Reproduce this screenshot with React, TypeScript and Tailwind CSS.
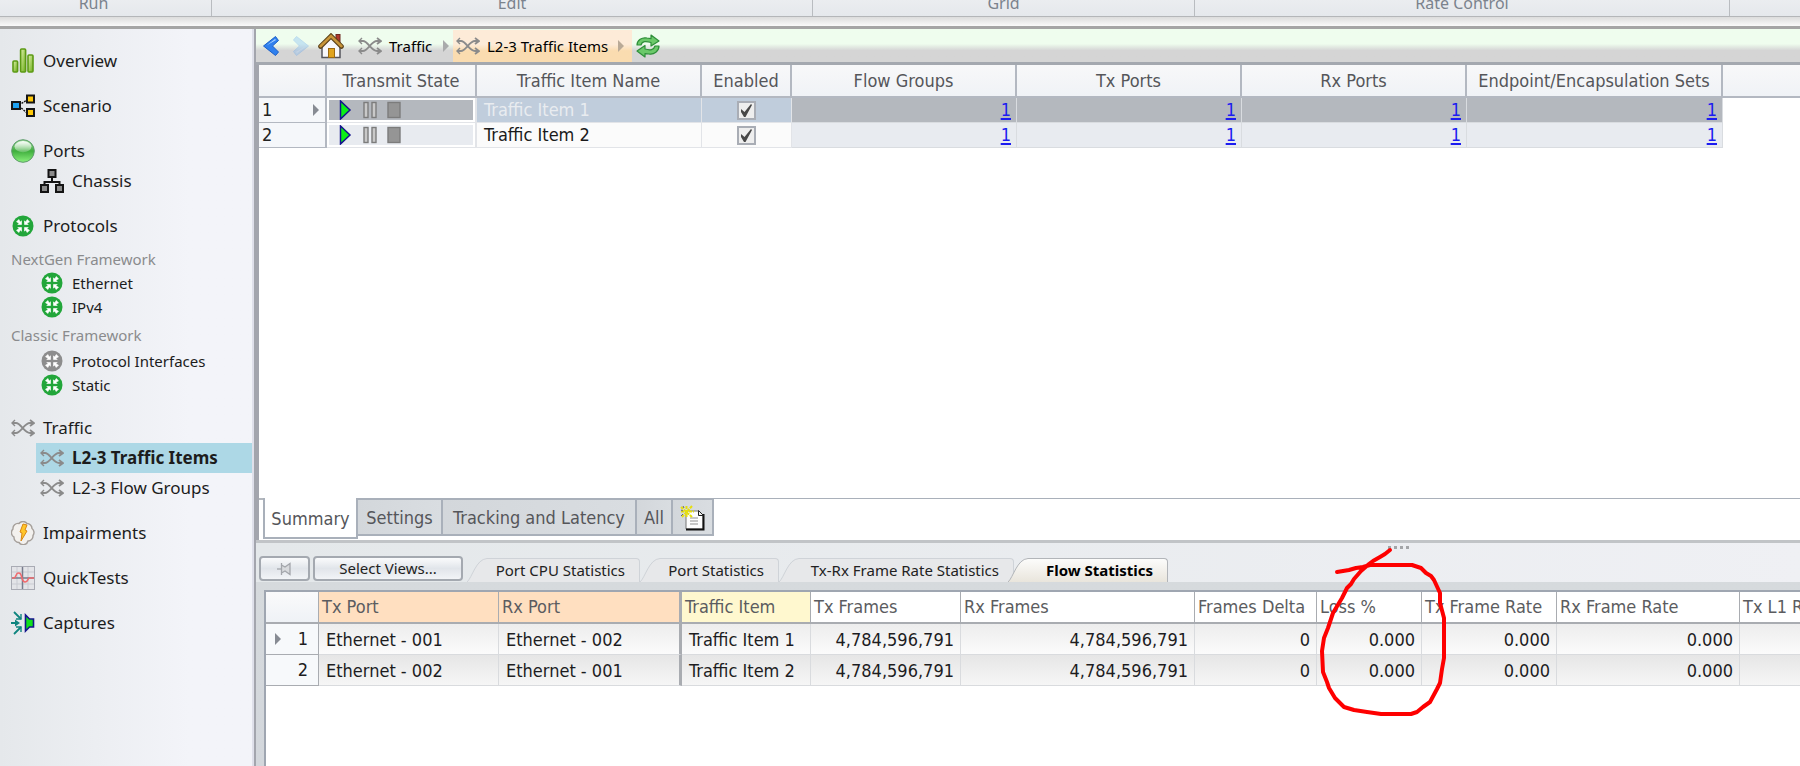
import type { ReactNode } from "react";
import clsx from "clsx";

/* ---------- icons ---------- */

function ShuffleIcon() {
  return (
    <svg width="24" height="18" viewBox="0 0 24 18" fill="none" stroke="#8b8b8b" strokeWidth="1.8" className="shrink-0">
      <path d="M1 4h4c5 0 8 10 14 10h3M1 14h4c5 0 8-10 14-10h3" />
      <path d="M19 1l4 3-4 3M19 11l4 3-4 3" strokeWidth="1.8" />
      <path d="M4 1L1 4l3 3M4 11l-3 3 3 3" strokeWidth="1.4" />
    </svg>
  );
}

function OverviewIcon() {
  return (
    <svg width="24" height="26" viewBox="0 0 24 26" className="shrink-0">
      <defs>
        <linearGradient id="bar" x1="0" y1="0" x2="1" y2="1">
          <stop offset="0" stopColor="#dcf0a8" />
          <stop offset="1" stopColor="#6fae1c" />
        </linearGradient>
      </defs>
      <g fill="url(#bar)" stroke="#5c9a14" strokeWidth="1.6">
        <rect x="2" y="13" width="4.6" height="11" rx="1" />
        <rect x="9.6" y="1" width="5" height="23" rx="1" />
        <rect x="17" y="7" width="5" height="17" rx="1" />
      </g>
    </svg>
  );
}

function ScenarioIcon() {
  return (
    <svg width="24" height="24" viewBox="0 0 24 24" stroke="#161616" strokeWidth="2" className="shrink-0">
      <path d="M8 11L16 6M8 12l8 7" strokeWidth="1.4" strokeDasharray="2 1" />
      <rect x="1" y="8" width="8" height="7" fill="#1ea2f2" />
      <rect x="16" y="1.500" width="7" height="7" fill="#ffc90a" />
      <rect x="16" y="15" width="7" height="7" fill="#ffc90a" />
    </svg>
  );
}

function PortsIcon() {
  return (
    <svg width="24" height="24" viewBox="0 0 24 24" className="shrink-0">
      <defs>
        <linearGradient id="ball" x1="0" y1="0" x2="0" y2="1">
          <stop offset="0" stopColor="#9ddb9b" />
          <stop offset=".5" stopColor="#3fae3d" />
          <stop offset="1" stopColor="#8af07c" />
        </linearGradient>
        <linearGradient id="gloss" x1="0" y1="0" x2="0" y2="1">
          <stop offset="0" stopColor="#fff" stopOpacity=".95" />
          <stop offset="1" stopColor="#fff" stopOpacity=".2" />
        </linearGradient>
      </defs>
      <circle cx="12" cy="12" r="11.3" fill="url(#ball)" stroke="#5d9a6b" />
      <ellipse cx="12" cy="7.6" rx="8.5" ry="5.6" fill="url(#gloss)" />
    </svg>
  );
}

function ChassisIcon() {
  return (
    <svg width="24" height="24" viewBox="0 0 24 24" stroke="#141414" strokeWidth="2" fill="#8c8c8c" className="shrink-0">
      <path d="M12 8v5M4.500 17v-4h15v4" fill="none" />
      <rect x="8.500" y="1" width="7" height="7" />
      <rect x="1" y="16" width="7" height="7" />
      <rect x="16" y="16" width="7" height="7" />
    </svg>
  );
}

function ProtocolIcon({ color = "#22a63a" }: { color?: string }) {
  return (
    <svg width="24" height="22" viewBox="0 0 24 22" className="shrink-0">
      <circle cx="12" cy="11" r="10.500" fill={color} />
      <g fill="#fff" stroke="#fff" strokeLinejoin="round" strokeWidth=".6">
        <path d="M10.500 9.500H6.800l1.300-1.300L5.500 6.800 7.800 4.500l1.400 2.600 1.300-1.300z" />
        <path d="M13.500 9.500h3.700l-1.300-1.300 2.600-1.400-2.300-2.300-1.400 2.600-1.300-1.300z" />
        <path d="M10.500 12.500H6.800l1.300 1.300-2.600 1.400 2.300 2.300 1.400-2.600 1.300 1.300z" />
        <path d="M13.500 12.500h3.700l-1.300 1.300 2.600 1.400-2.300 2.300-1.400-2.600-1.300 1.300z" />
      </g>
    </svg>
  );
}

function ImpairmentsIcon() {
  return (
    <svg width="24" height="24" viewBox="0 0 24 24" className="shrink-0">
      <path
        d="M8 2.500a5 5 0 0 1 8 0 5 5 0 0 1 5 5 5 5 0 0 1 1 7 5 5 0 0 1-5 5.500 5 5 0 0 1-9 1.500 5 5 0 0 1-5-5.500 5 5 0 0 1-1-8 5 5 0 0 1 6-5.500z"
        fill="#f3f1ee"
        stroke="#a59f9a"
        strokeWidth="1.400"
      />
      <path d="M12 3l4 1-2 5 2 1-6 10 1-8-2-1z" fill="#ffc62b" stroke="#d98613" />
    </svg>
  );
}

function QuickTestsIcon() {
  return (
    <svg width="24" height="24" viewBox="0 0 24 24" className="shrink-0">
      <rect x=".5" y=".5" width="23" height="23" fill="#e3e4e8" stroke="#a9abb4" />
      <path d="M6 1v22M17 1v22M1 6h22M1 18h22" stroke="#c9cbd2" />
      <path d="M11.500 1v22M1 12h22" stroke="#777b8c" strokeWidth="1.500" />
      <path d="M1 12h2c2 0 2-5 4-5s2 0 3 2 1 7 4 7 3-4 4-4h5" fill="none" stroke="#f0696d" strokeWidth="1.600" />
    </svg>
  );
}

function CapturesIcon() {
  return (
    <svg width="24" height="24" viewBox="0 0 24 24" className="shrink-0">
      <g fill="none" stroke="#0f857f" strokeWidth="1.800">
        <path d="M0 12h6M3 1l7 7M3 23l7-7" />
        <path d="M10 3v5H5M10 21v-5H5" strokeWidth="1.400" />
      </g>
      <path d="M4 8.500L9 12l-5 3.500z" fill="#0f857f" />
      <path d="M14.500 4v16l4-4h4V8h-4z" fill="#12e01c" stroke="#14148c" strokeWidth="1.600" />
    </svg>
  );
}

function BackIcon({ faded = false }: { faded?: boolean }) {
  return (
    <svg width="18" height="22" viewBox="0 0 18 22" className={clsx("shrink-0", faded && "rotate-180 opacity-35")}>
      <path d="M13.500 1.500L1.500 11l12 9.500 3-3.500-6-6 6-5.500z" fill={faded ? "#7db9f5" : "#2f80ee"} stroke={faded ? "#5fa3ec" : "#1a5fc9"} strokeLinejoin="round" />
      <path d="M13 4L4.500 10.500 14 5z" fill="#a9d2ff" />
    </svg>
  );
}

function HomeIcon() {
  return (
    <svg width="26" height="26" viewBox="0 0 26 26" className="shrink-0">
      <rect x="18" y="1.500" width="4" height="8" fill="#b0392c" stroke="#6e2a20" />
      <path d="M4 12v12.500h18V12l-9-8z" fill="#f8f8fb" stroke="#55555c" strokeWidth="1.500" />
      <rect x="10.500" y="15.500" width="6" height="9" fill="#e0a41f" stroke="#9c6a12" />
      <path d="M2.500 13.500L13 3l10.500 10.500" fill="none" stroke="#5a4018" strokeWidth="4.600" strokeLinecap="round" />
      <path d="M2.500 13.200L13 3l10.500 10.200" fill="none" stroke="#c7953a" strokeWidth="2.600" strokeLinecap="round" />
    </svg>
  );
}

function RefreshIcon() {
  return (
    <svg width="26" height="24" viewBox="0 0 26 24" className="shrink-0" fill="#6cc96a" stroke="#2f8f3a" strokeWidth="1.200" strokeLinejoin="round">
      <path d="M2 11c0-5 5-8 10-7l4 .6V1l8 6-8 5V8.500C11 7 7 7 6 11z" />
      <path d="M24 12c0 5-5 9-10 8l-4-.4V23l-8-6 8-5.500V15c5 1.500 9 1 10-3z" />
    </svg>
  );
}

function Caret({ className = "fill-[#a9abab]" }: { className?: string }) {
  return (
    <svg width="6" height="12" viewBox="0 0 6 12" className={clsx("shrink-0", className)}>
      <path d="M0 0l6 6-6 6z" />
    </svg>
  );
}

function TransportIcons() {
  return (
    <svg width="64" height="20" viewBox="0 0 64 20">
      <path d="M1.500 1v18l9.500-9z" fill="#0aef16" stroke="#14148c" strokeWidth="1.500" />
      <g stroke="#7c7c7c" strokeWidth="1.400">
        <rect x="25" y="2.500" width="4" height="15" fill="#c9c9c9" />
        <rect x="33" y="2.500" width="4" height="15" fill="#c9c9c9" />
        <rect x="49" y="2.500" width="12" height="15" fill="#959595" />
      </g>
    </svg>
  );
}

function NewTabIcon() {
  return (
    <svg width="26" height="26" viewBox="0 0 26 26">
      <path d="M6 6h13l4 4v14H6z" fill="#fdfdfd" stroke="#777" />
      <path d="M23.500 9v15.500H6" fill="none" stroke="#111" strokeWidth="2" />
      <path d="M18.500 5.500v5h5z" fill="#eee" stroke="#222" />
      <path d="M10 13h8M10 16h8M10 19h8" stroke="#b5b5b5" strokeWidth="1.500" />
      <path d="M1 2l11 10M12 1L2 12M6.500 1v12M1 6.500h13" stroke="#e6df0c" strokeWidth="2" strokeDasharray="3 1" />
      <path d="M1 5l2 1M3 1l1 2M1 11l2-2" stroke="#666" />
    </svg>
  );
}

function PinIcon() {
  return (
    <svg width="16" height="14" viewBox="0 0 16 14" fill="#d8dadd" stroke="#a3a6ab" strokeWidth="1.300">
      <path d="M0 7h4" />
      <path d="M4.500 1v12M4.500 3L8 5l5-3.500v11L8 9l-3.500 2" />
    </svg>
  );
}

/* ---------- sidebar ---------- */

type NavProps = { icon: ReactNode; label: string; sub?: boolean; small?: boolean; active?: boolean };

function NavItem({ icon, label, sub, small, active }: NavProps) {
  return (
    <li className={clsx(sub && "pl-9")}>
      <a
        href="#"
        aria-current={active ? "page" : undefined}
        className={clsx(
          "flex items-center gap-2 whitespace-nowrap",
          sub ? "pl-1" : "pl-[11px]",
          small ? "h-6 text-[15px]" : "h-[30px] text-[17px]",
          active && "bg-[#add8e6] font-bold",
        )}
      >
        {icon}
        {label}
      </a>
    </li>
  );
}

function NavGroup({ children }: { children: ReactNode }) {
  return <ul className="mb-[15px]">{children}</ul>;
}

function Sidebar() {
  return (
    <nav className="w-[252px] shrink-0 overflow-hidden bg-linear-to-r from-[#e5e8eb] to-[#f3f4f9] to-75% pt-[17px] text-[#1c1c1c]">
      <NavGroup><NavItem icon={<OverviewIcon />} label="Overview" /></NavGroup>
      <NavGroup><NavItem icon={<ScenarioIcon />} label="Scenario" /></NavGroup>
      <NavGroup>
        <NavItem icon={<PortsIcon />} label="Ports" />
        <NavItem sub icon={<ChassisIcon />} label="Chassis" />
      </NavGroup>
      <ul className="mb-4">
        <NavItem icon={<ProtocolIcon />} label="Protocols" />
        <li className="mt-1.5 h-6 pl-[11px] text-[15px] leading-6 text-[#8a8b8d]">NextGen Framework</li>
        <NavItem sub small icon={<ProtocolIcon />} label="Ethernet" />
        <NavItem sub small icon={<ProtocolIcon />} label="IPv4" />
        <li className="mt-1 h-[26px] pl-[11px] text-[15px] leading-6 text-[#8a8b8d]">Classic Framework</li>
        <NavItem sub small icon={<ProtocolIcon color="#8d8d8d" />} label="Protocol Interfaces" />
        <NavItem sub small icon={<ProtocolIcon />} label="Static" />
      </ul>
      <NavGroup>
        <NavItem icon={<ShuffleIcon />} label="Traffic" />
        <NavItem sub active icon={<ShuffleIcon />} label="L2-3 Traffic Items" />
        <NavItem sub icon={<ShuffleIcon />} label="L2-3 Flow Groups" />
      </NavGroup>
      <NavGroup><NavItem icon={<ImpairmentsIcon />} label="Impairments" /></NavGroup>
      <NavGroup><NavItem icon={<QuickTestsIcon />} label="QuickTests" /></NavGroup>
      <NavGroup><NavItem icon={<CapturesIcon />} label="Captures" /></NavGroup>
    </nav>
  );
}

/* ---------- ribbon and breadcrumb ---------- */

const ribbonGroups = [
  { label: "Run", width: "w-[212px] pr-6" },
  { label: "Edit", width: "w-[601px]" },
  { label: "Grid", width: "w-[382px]" },
  { label: "Rate Control", width: "w-[535px]" },
];

function Ribbon() {
  return (
    <header className="shrink-0 overflow-hidden">
      <div className="flex h-[17px] border-b border-[#b4b6b9] bg-linear-to-b from-[#ebedf0] to-[#e5e8ec] text-base text-[#7b838d]">
        {ribbonGroups.map((g) => (
          <div key={g.label} className={clsx("flex shrink-0 items-end justify-center border-r border-[#b9bcc0] pb-[3px] leading-5", g.width)}>
            {g.label}
          </div>
        ))}
      </div>
      <div className="h-[9px] bg-linear-to-b from-[#dcdcdc] to-[#fafafa]" />
      <div className="h-[3px] bg-[#a5a5a5]" />
    </header>
  );
}

function Breadcrumb() {
  return (
    <div className="flex h-9 shrink-0 items-center border-b-3 border-[#a4a8af] bg-linear-to-b from-[#effdee] from-45% to-[#d5d5d5] to-65% pt-px text-[15px] text-black">
      <button type="button" aria-label="Back" className="ml-1.5 flex"><BackIcon /></button>
      <button type="button" aria-label="Forward" className="ml-3 flex"><BackIcon faded /></button>
      <button type="button" aria-label="Home" className="ml-2 flex"><HomeIcon /></button>
      <a href="#" className="ml-3.5 flex w-[85px] items-center gap-[7px]"><ShuffleIcon />Traffic</a>
      <Caret />
      <div className="ml-1 flex h-full items-center gap-2.5 bg-linear-to-b from-[#fdebd8] from-45% to-[#fadcb0] to-65% pr-2 pl-[3px]">
        <a href="#" className="flex items-center gap-[7px]"><ShuffleIcon />L2-3 Traffic Items</a>
        <Caret className="fill-[#b9aa97]" />
      </div>
      <button type="button" aria-label="Refresh" className="ml-[3px] flex"><RefreshIcon /></button>
    </div>
  );
}

/* ---------- traffic item grid ---------- */

const itemCols = [
  { label: "", width: "w-[68px]" },
  { label: "Transmit State", width: "w-[150px]" },
  { label: "Traffic Item Name", width: "w-[225px]" },
  { label: "Enabled", width: "w-[90px]" },
  { label: "Flow Groups", width: "w-[225px]" },
  { label: "Tx Ports", width: "w-[225px]" },
  { label: "Rx Ports", width: "w-[225px]" },
  { label: "Endpoint/Encapsulation Sets", width: "w-[256px]" },
];

const items = [
  { id: 1, name: "Traffic Item 1", selected: true },
  { id: 2, name: "Traffic Item 2", selected: false },
];

function ItemGrid() {
  return (
    <div className="min-h-0 flex-1 overflow-hidden bg-white font-['DejaVu_Sans_Condensed','DejaVu_Sans',sans-serif] text-lg leading-6">
      <table className="w-full min-w-[1541px] table-fixed border-separate border-spacing-0">
        <thead>
          <tr className="h-[33px] bg-linear-to-b from-[#f8f8f9] to-[#eff2f6] text-[#55565a]">
            {itemCols.map((c) => (
              <th key={c.label} scope="col" className={clsx("border-r-2 border-b-2 border-[#b3b8c1] p-0 font-normal", c.width)}>
                {c.label}
              </th>
            ))}
            <th className="border-b-2 border-[#b3b8c1] p-0" />
          </tr>
        </thead>
        <tbody>
          {items.map((it) => {
            const shade = it.selected ? "bg-[#b4b8be]" : "bg-[#e8ebf0]";
            const soft = it.selected ? "bg-[#c0cddc]" : "bg-[#fbfbfb]";
            return (
              <tr key={it.id} className="h-[25px]">
                <th scope="row" className="border-r-2 border-b border-[#b3b8c1] bg-[#f5f7fa] p-0 font-normal text-[#222]">
                  <div className="flex items-center justify-between pr-1.5 pl-[3px]">
                    {it.id}
                    {it.selected && <Caret className="fill-[#878b93]" />}
                  </div>
                </th>
                <td className="border-r-2 border-b border-[#e2e4e8] bg-white p-0.5">
                  <div className={clsx("flex h-5 items-center pl-2.5", shade)}><TransportIcons /></div>
                </td>
                <td className={clsx("border-r border-b border-[#e2e4e8] py-0 pr-0 pl-[7px]", soft, it.selected ? "text-[#e9ecf0]" : "text-[#1a1a1a]")}>{it.name}</td>
                <td className={clsx("border-r border-b border-[#e2e4e8] p-0", soft)}>
                  <label className="relative mx-auto flex size-[19px]">
                    <input type="checkbox" defaultChecked aria-label={`Enable ${it.name}`} className="peer size-[19px] appearance-none border-2 border-[#a9adb5] bg-[#eeeeee]" />
                    <svg viewBox="0 0 19 19" className="pointer-events-none absolute inset-0 hidden peer-checked:block">
                      <path d="M4 8l3.500 3L14 3l1 1-6.500 12H7L4 11z" fill="#484848" />
                    </svg>
                  </label>
                </td>
                {itemCols.slice(4).map((c) => (
                  <td key={c.label} className={clsx("border-r border-b border-[#d9dce0] py-0 pr-[5px] pl-0 text-right", shade)}>
                    <a href="#" className="text-[#1c1cf0] underline decoration-2 underline-offset-2">1</a>
                  </td>
                ))}
              </tr>
            );
          })}
        </tbody>
      </table>
    </div>
  );
}

function GridTabs() {
  const side = "flex h-[38px] items-center justify-center border-t-2 border-r-2 border-b-2 border-[#a9b0ba] bg-linear-to-r from-[#d3d7db] to-[#d9dde1] pt-0.5";
  return (
    <div role="tablist" className="flex h-[42px] shrink-0 items-start bg-white font-['DejaVu_Sans_Condensed','DejaVu_Sans',sans-serif] text-lg text-[#55565a]">
      <div className="w-1 self-start border-t-2 border-[#b4b8be]" />
      <button type="button" role="tab" aria-selected className="flex h-[41px] w-[95px] items-center justify-center border-x-2 border-b-2 border-[#a9b0ba] bg-white pt-0.5">Summary</button>
      <button type="button" role="tab" className={clsx(side, "w-[85px]")}>Settings</button>
      <button type="button" role="tab" className={clsx(side, "w-[194px]")}>Tracking and Latency</button>
      <button type="button" role="tab" className={clsx(side, "w-9")}>All</button>
      <button type="button" aria-label="New tab" className={clsx(side, "w-[41px]")}><NewTabIcon /></button>
      <div className="flex-1 border-t border-[#a9b0ba]" />
    </div>
  );
}

/* ---------- statistics ---------- */

const statTabs = [
  { label: "Port CPU Statistics", width: "w-[173px]" },
  { label: "Port Statistics", width: "w-[139px]" },
  { label: "Tx-Rx Frame Rate Statistics", width: "w-[235px]" },
];

function StatTab({ label, width, active }: { label: string; width: string; active?: boolean }) {
  return (
    <button type="button" role="tab" aria-selected={!!active} className={clsx("flex h-6 shrink-0 whitespace-nowrap", width, active && "-ml-1.5")}>
      <svg width="22" height="24" viewBox="0 0 22 24" className="shrink-0">
        <defs>
          <linearGradient id="tabfill" x1="0" y1="0" x2="0" y2="1">
            <stop offset="0" stopColor="#fcfcfb" />
            <stop offset="1" stopColor="#e9e5dc" />
          </linearGradient>
        </defs>
        <path d="M0 24C5 20 9 1 20 .5h2V24z" fill={active ? "url(#tabfill)" : "#e7e8ea"} />
        <path d="M0 24C5 20 9 1 20 .5h2" fill="none" stroke={active ? "#b2b5b9" : "#cfd3d8"} />
      </svg>
      <span
        className={clsx(
          "flex h-full flex-1 items-center justify-end rounded-tr-sm border-t border-r pr-3.5",
          active ? "border-[#b2b5b9] bg-linear-to-b from-[#fcfcfb] to-[#e9e5dc] font-bold text-black" : "border-[#cfd3d8] bg-[#e7e8ea] text-[#222]",
        )}
      >
        {label}
      </span>
    </button>
  );
}

const statCols = [
  { label: "Tx Port", width: "w-[180px]", tone: "bg-[#ffdfc0]" },
  { label: "Rx Port", width: "w-[183px]", tone: "bg-[#ffdfc0]" },
  { label: "Traffic Item", width: "w-[129px]", tone: "bg-[#fff8cf]" },
  { label: "Tx Frames", width: "w-[150px]", tone: "bg-white" },
  { label: "Rx Frames", width: "w-[234px]", tone: "bg-white" },
  { label: "Frames Delta", width: "w-[122px]", tone: "bg-white" },
  { label: "Loss %", width: "w-[105px]", tone: "bg-white" },
  { label: "Tx Frame Rate", width: "w-[135px]", tone: "bg-white" },
  { label: "Rx Frame Rate", width: "w-[183px]", tone: "bg-white" },
  { label: "Tx L1 Rate", width: "w-[140px]", tone: "bg-white" },
];

const stats = [
  ["Ethernet - 001", "Ethernet - 002", "Traffic Item 1", "4,784,596,791", "4,784,596,791", "0", "0.000", "0.000", "0.000", ""],
  ["Ethernet - 002", "Ethernet - 001", "Traffic Item 2", "4,784,596,791", "4,784,596,791", "0", "0.000", "0.000", "0.000", ""],
];

function StatsTable() {
  return (
    <table className="w-[1614px] table-fixed border-separate border-spacing-0 text-lg leading-6">
      <thead>
        <tr className="h-8 text-left text-[#5b5c60]">
          <th className="w-[53px] border-r border-b-2 border-[#a9acb1] bg-linear-to-b from-[#fafafb] to-[#eff2f6] p-0" />
          {statCols.map((c, i) => (
            <th
              key={c.label}
              scope="col"
              className={clsx("overflow-hidden border-b-2 border-[#a9acb1] py-0 pr-0 pl-[3px] font-normal whitespace-nowrap", i === 1 ? "border-r-3" : "border-r", c.width, c.tone)}
            >
              {c.label}
            </th>
          ))}
        </tr>
      </thead>
      <tbody>
        {stats.map((row, r) => (
          <tr key={r} className="h-[31px] text-[#1d1d1f]">
            <th scope="row" className="border-r border-b border-[#a9acb1] bg-[#f7f9fb] p-0 font-normal">
              <div className="flex items-center justify-end gap-[17px] pr-2.5">
                {r === 0 && <Caret className="fill-[#878b93]" />}
                {r + 1}
              </div>
            </th>
            {row.map((v, i) => (
              <td
                key={i}
                className={clsx(
                  "border-b border-b-[#d9dbde] bg-linear-to-b pb-0 pt-0.5 whitespace-nowrap",
                  r === 0 ? "from-[#ededed] to-[#fbfbfb]" : "from-[#e6e6e6] to-[#f6f6f6]",
                  i === 1 ? "border-r-3 border-r-[#a9acb1]" : "border-r border-r-[#d9dbde]",
                  i < 3 ? "pr-0 pl-[7px]" : "pr-1.5 pl-0 text-right",
                )}
              >
                {v}
              </td>
            ))}
          </tr>
        ))}
      </tbody>
    </table>
  );
}

function Annotation() {
  return (
    <svg width="122" height="176" viewBox="1330 544 122 176" className="pointer-events-none absolute top-0.5 left-[1073px] overflow-visible" fill="none" stroke="#fe0000" strokeWidth="4" strokeLinejoin="round" strokeLinecap="round">
      <path d="M1338 571L1350 569L1357 567L1364 566L1371 564H1413L1422 567L1427 572L1432 575L1435 579L1441 592V602L1445 617V657L1443 668L1441 682L1438 688L1431 701L1424 706L1418 711L1412 713H1382L1368 711L1355 709L1345 706L1336 697L1330 687L1328 681L1324 671L1323 650L1325 637L1329 627L1334 612L1343 597L1348 587L1352 583L1355 578L1362 570L1370 563L1374 560L1381 556L1386 553L1391 549" />
    </svg>
  );
}

function StatsPanel() {
  const button = "flex h-[25px] shrink-0 items-center justify-center rounded-sm border-2 border-[#a4a9b0] bg-linear-to-b from-[#fafbfc] via-[#e1e5ea] to-[#f2f4f7]";
  return (
    <section className="relative flex h-[226px] shrink-0 flex-col border-t-3 border-[#c1c4c7] bg-linear-to-r from-[#e4e8ea] to-[#eff0f4]">
      <div className="flex h-[13px] shrink-0 items-start pt-[3px] pl-[1132px]">
        <svg width="22" height="4" viewBox="0 0 22 4" fill="#a3a5a8">
          <path d="M0 0h3v3h-3zM6 0h3v3h-3zM12 0h3v3h-3zM18 0h3v3h-3z" />
        </svg>
      </div>
      <div className="flex h-[26px] shrink-0 pl-[3px] text-[15px]">
        <button type="button" aria-label="Pin" className={clsx(button, "w-[51px]")}><PinIcon /></button>
        <button type="button" className={clsx(button, "ml-[3px] w-[150px] text-[#222]")}>Select Views...</button>
        <div role="tablist" className="ml-1 flex items-end">
          {statTabs.map((t) => (
            <StatTab key={t.label} label={t.label} width={t.width} />
          ))}
          <StatTab active label="Flow Statistics" width="w-[160px]" />
        </div>
      </div>
      <div className="flex min-h-0 flex-1 bg-linear-to-b from-[#d6dadd] to-[#d3d7dc] pt-2 pl-2">
        <div className="min-w-0 flex-1 overflow-hidden border-t-2 border-l-2 border-[#9fa6b1] bg-white font-['DejaVu_Sans_Condensed','DejaVu_Sans',sans-serif]">
          <StatsTable />
        </div>
      </div>
      <Annotation />
    </section>
  );
}

export default function App() {
  return (
    <div className="flex h-screen flex-col overflow-hidden bg-[#e8ebee] font-['Noto_Sans','Open_Sans',sans-serif]">
      <Ribbon />
      <div className="flex min-h-0 flex-1">
        <Sidebar />
        <div className="w-1 shrink-0 border-r-2 border-[#a3a5ad] bg-[#dfe0ea]" />
        <main className="flex min-w-0 flex-1 flex-col">
          <Breadcrumb />
          <div className="flex min-h-0 flex-1 flex-col border-l-3 border-[#a3a5ad]">
            <ItemGrid />
            <GridTabs />
          </div>
          <StatsPanel />
        </main>
      </div>
    </div>
  );
}
